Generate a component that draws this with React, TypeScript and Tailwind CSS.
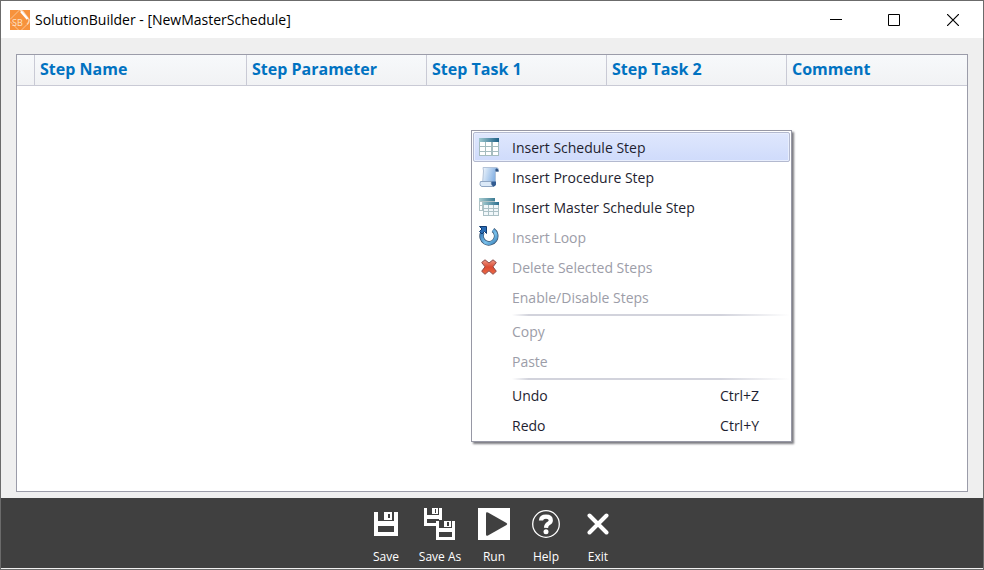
import type { ReactNode } from "react";

const uiFont = "font-['Open_Sans','Noto_Sans',sans-serif]";

function AppLogo() {
  return (
    <svg width="20" height="20" viewBox="0 0 20 20" aria-hidden="true">
      <rect width="20" height="20" fill="#f7923c" />
      <path d="M0 9.500 9.500 0M0 11.500 8.500 20M11.500 20 17 14.500" stroke="#fbc493" strokeWidth="1" fill="none" />
      <path d="M10 .5Q13 .5 14 3L19 9.500Q19.500 12 17 14.500" stroke="#fcd5b0" strokeWidth="1.500" fill="none" />
      <path d="M11 1.500 17.500 9" stroke="#fff" strokeWidth="2" />
      <text x="2" y="16" fontSize="9" fontFamily="Open Sans, sans-serif" fill="#fde2c8">SB</text>
    </svg>
  );
}

function TableIcon() {
  return (
    <svg width="20" height="18" viewBox="0 0 20 18" aria-hidden="true">
      <defs>
        <linearGradient id="tableHead" x1="0" x2="1">
          <stop offset="0" stopColor="#9fc9cf" />
          <stop offset="1" stopColor="#1c5f86" />
        </linearGradient>
      </defs>
      <rect width="20" height="18" fill="#a5bcbf" />
      <rect width="20" height="4" fill="url(#tableHead)" />
      <g fill="#fff">
        {[4, 9, 14].map((y) =>
          [1, 7, 14].map((x) => (
            <rect key={`${x}-${y}`} x={x} y={y} width="5" height={y === 14 ? 3 : 4} />
          )),
        )}
      </g>
    </svg>
  );
}

function ScrollIcon() {
  return (
    <svg width="20" height="20" viewBox="0 0 20 20" aria-hidden="true">
      <defs>
        <linearGradient id="paper" x1="0" x2="1" y2=".3">
          <stop offset="0" stopColor="#f1f7fd" />
          <stop offset="1" stopColor="#79a9e0" />
        </linearGradient>
      </defs>
      <path d="M4 .5h13q2.500 0 2.500 2.500V4.500H16.500v13H3.500L4.500 4Z" fill="url(#paper)" stroke="#b3c3d8" />
      <path d="M16.500 4.500V2.500Q17 1 18 1.500T19.500 3.500v1Z" fill="#2f527f" />
      <path d="M1.500 14.500H12.500q-1 4 2.500 5H3Q0 19 1.500 14.500Z" fill="#dbe9f8" stroke="#8fa6c4" />
      <path d="M12.500 14.500h4.500v3q-.5 2-2.500 2Q12 18.500 12.500 14.500Z" fill="#315b91" />
    </svg>
  );
}

function TablesIcon() {
  return (
    <svg width="20" height="18" viewBox="0 0 20 18" aria-hidden="true">
      <defs>
        <linearGradient id="backHead" x1="0" x2="1">
          <stop offset="0" stopColor="#a9cdd1" />
          <stop offset="1" stopColor="#3c7b93" />
        </linearGradient>
        <linearGradient id="frontHead" x1="0" x2="1">
          <stop offset="0" stopColor="#9cc4ca" />
          <stop offset="1" stopColor="#2b6f90" />
        </linearGradient>
      </defs>
      <path d="M0 0h16v13H0Z" fill="#b0c3c6" />
      <path d="M0 0h16v3H0Z" fill="url(#backHead)" />
      <path d="M1 4h2v3H1ZM1 8h2v4H1Z" fill="#fff" />
      <path d="M4 4h16v14H4Z" fill="#abc0c5" />
      <path d="M4 4h16v3H4Z" fill="url(#frontHead)" />
      <path
        d="M5 7h4v3H5ZM10 7h4v3h-4ZM15 7h4v3h-4ZM5 11h4v2H5ZM10 11h4v2h-4ZM15 11h4v2h-4ZM5 14h4v3H5ZM10 14h4v3h-4ZM15 14h4v3h-4Z"
        fill="#f1f7fa"
      />
    </svg>
  );
}

function LoopIcon() {
  return (
    <svg width="20" height="20" viewBox="0 0 20 20" aria-hidden="true" className="-mt-0.5">
      <defs>
        <linearGradient id="loop" x1="0" x2="1" y2="1">
          <stop offset="0" stopColor="#2a6fb3" />
          <stop offset=".6" stopColor="#79c0ea" />
          <stop offset="1" stopColor="#3d86bd" />
        </linearGradient>
      </defs>
      <path d="M3.500 6.500A7.300 7.300 0 1 0 14 4" fill="none" stroke="#39536f" strokeWidth="4.600" />
      <path d="M3.500 6.500A7.300 7.300 0 1 0 14 4" fill="none" stroke="url(#loop)" strokeWidth="3.200" />
      <path d="M.5.5h7v7L5.500 5.500 3 8 .5 5.500 3 3Z" fill="#2a6cb4" stroke="#123c72" />
    </svg>
  );
}

function DeleteIcon() {
  return (
    <svg width="16" height="16" viewBox="0 0 16 16" aria-hidden="true">
      <defs>
        <linearGradient id="cross" y2="1" x2="0">
          <stop offset="0" stopColor="#ee9a88" />
          <stop offset=".5" stopColor="#dc4a32" />
          <stop offset="1" stopColor="#ec6a46" />
        </linearGradient>
      </defs>
      <path
        d="M4 .8 8 4 12 .8 15.300 3.500 12 7.800 15.300 12.300 12 15.300 8 11.800 4 15.300 .7 12.300 4 7.800 .7 3.500Z"
        fill="url(#cross)"
        stroke="#8d4a48"
        strokeLinejoin="round"
      />
    </svg>
  );
}

function SaveIcon() {
  return (
    <svg width="24" height="24" viewBox="0 0 24 24" aria-hidden="true" fill="#fff" fillRule="evenodd">
      <path d="M0 0h4v9h16V0h4v24H0ZM4 14v6h16v-6Z" />
      <path d="M10 0h8v8h-8ZM14 2v4h2V2Z" />
    </svg>
  );
}

function SaveAsIcon() {
  return (
    <svg width="32" height="32" viewBox="0 0 32 32" aria-hidden="true" fill="#fff" fillRule="evenodd">
      <path d="M0 0h3v7h12V0h3v18H0ZM3 11v4h12v-4Z" />
      <path d="M8 0h6v6H8ZM11 1v4h1V1Z" />
      <path d="M12 12h20v20H12Z" fill="#404040" />
      <path d="M12 13h3v7h13v-7h3v19H12ZM15 24v5h13v-5Z" />
      <path d="M20 13h7v6h-7ZM23 14v4h2v-4Z" />
    </svg>
  );
}

function RunIcon() {
  return (
    <svg width="32" height="32" viewBox="0 0 32 32" aria-hidden="true">
      <path d="M0 0h32v32H0Z" fill="#fff" />
      <path d="M8 5.500q0-2 2-1L28.500 15q1.500 1 0 2L10 27.500q-2 1-2-1Z" fill="#404040" />
    </svg>
  );
}

function HelpIcon() {
  return (
    <svg width="28" height="28" viewBox="0 0 28 28" aria-hidden="true" fill="none" stroke="#fff">
      <circle cx="14" cy="14" r="13.300" strokeWidth="1.300" />
      <path d="M9 10.500q.2-3.800 5-3.800t4.800 3.600q0 2-2.300 3.200T14 17.800" strokeWidth="4.200" />
      <circle cx="14" cy="21.700" r="2.500" fill="#fff" stroke="none" />
    </svg>
  );
}

function ExitIcon() {
  return (
    <svg width="22" height="22" viewBox="0 0 22 22" aria-hidden="true">
      <path d="m2.500 2.500 17 17m0-17-17 17" stroke="#fff" strokeWidth="4" strokeLinecap="round" />
    </svg>
  );
}

type MenuEntry = { label: string; icon?: ReactNode; shortcut?: string; disabled?: boolean; active?: boolean };

const menuGroups: MenuEntry[][] = [
  [
    { label: "Insert Schedule Step", icon: <TableIcon />, active: true },
    { label: "Insert Procedure Step", icon: <ScrollIcon /> },
    { label: "Insert Master Schedule Step", icon: <TablesIcon /> },
    { label: "Insert Loop", icon: <LoopIcon />, disabled: true },
    { label: "Delete Selected Steps", icon: <DeleteIcon />, disabled: true },
    { label: "Enable/Disable Steps", disabled: true },
  ],
  [
    { label: "Copy", disabled: true },
    { label: "Paste", disabled: true },
  ],
  [
    { label: "Undo", shortcut: "Ctrl+Z" },
    { label: "Redo", shortcut: "Ctrl+Y" },
  ],
];

function MenuItem({ label, icon, shortcut, disabled, active }: MenuEntry) {
  return (
    <button
      type="button"
      role="menuitem"
      disabled={disabled}
      className={`flex h-[30px] w-full items-center rounded-[2px] border pr-[30px] text-left text-[14px] ${
        active
          ? "border-[#b3b9cf] bg-linear-to-b from-[#dfe7fd] to-[#cfdbfb] shadow-[inset_0_0_0_1px_#e8eefd]"
          : "border-transparent"
      } ${disabled ? "text-[#9c9da8]" : "text-[#1e1e30]"}`}
    >
      <span className="flex w-[30px] shrink-0 items-center justify-center">{icon}</span>
      <span className="ml-2 flex-1">{label}</span>
      {shortcut && <span>{shortcut}</span>}
    </button>
  );
}

function ContextMenu() {
  return (
    <div
      role="menu"
      className="absolute top-[75px] left-[454px] w-[321px] border border-[#9798a5] bg-white p-px shadow-[2px_2px_2px_#7c7c82]"
    >
      {menuGroups.map((group, index) => (
        <div key={group[0].label}>
          {index > 0 && (
            <div role="separator" className="flex h-1 items-end pl-[39px]">
              <div className="h-0.5 w-full bg-[linear-gradient(to_right,transparent,#d2d3dc_6%,#d2d3dc_75%,transparent)]" />
            </div>
          )}
          {group.map((entry) => (
            <MenuItem key={entry.label} {...entry} />
          ))}
        </div>
      ))}
    </div>
  );
}

const columns = [
  { name: "Step Name", width: "w-[212px]" },
  { name: "Step Parameter", width: "w-[180px]" },
  { name: "Step Task 1", width: "w-[180px]" },
  { name: "Step Task 2", width: "w-[180px]" },
];

const actions = [
  { label: "Save", icon: <SaveIcon />, width: "w-[52px]" },
  { label: "Save As", icon: <SaveAsIcon />, width: "w-[56px]" },
  { label: "Run", icon: <RunIcon />, width: "w-[52px]" },
  { label: "Help", icon: <HelpIcon />, width: "w-[52px]" },
  { label: "Exit", icon: <ExitIcon />, width: "w-[52px]" },
];

function TitleBar() {
  return (
    <header className="flex h-[37px] items-center bg-white pl-[9px]">
      <AppLogo />
      <h1 className="ml-[5px] flex-1 text-[14px] text-black">SolutionBuilder - [NewMasterSchedule]</h1>
      <div className="flex h-full">
        <button type="button" aria-label="Minimize" className="flex w-[58px] items-center justify-center">
          <svg width="12" height="12" viewBox="0 0 12 12" shapeRendering="crispEdges">
            <path d="M0 5h12v1H0Z" />
          </svg>
        </button>
        <button type="button" aria-label="Maximize" className="flex w-[58px] items-center justify-center">
          <svg width="12" height="12" viewBox="0 0 12 12">
            <path d="M.5.5h11v11H.5Z" fill="none" stroke="#000" />
          </svg>
        </button>
        <button type="button" aria-label="Close" className="flex w-[60px] items-center justify-center">
          <svg width="12" height="12" viewBox="0 0 12 12">
            <path d="m0 0 12 12M12 0 0 12" stroke="#000" strokeWidth="1.200" />
          </svg>
        </button>
      </div>
    </header>
  );
}

export default function App() {
  return (
    <div className={`flex min-h-screen flex-col border border-[#6b6b6b] bg-[#efefef] ${uiFont}`}>
      <TitleBar />
      <main className="flex flex-1 flex-col px-[15px] pt-4 pb-1.5">
        <div className="relative flex-1 border border-[#9b9ca9] bg-white">
          <table className="w-full table-fixed border-separate border-spacing-0">
            <thead>
              <tr className="h-[31px] bg-linear-to-b from-[#f7f9fb] to-[#f1f2f4] text-left text-[16px] font-bold text-[#0072c1]">
                <td className="w-[18px] border-r border-b border-[#c9cad5] p-0" />
                {columns.map((column) => (
                  <th
                    key={column.name}
                    scope="col"
                    className={`${column.width} border-r border-b border-[#c9cad5] pt-0 pr-0 pb-0.5 pl-[5px] leading-[20px]`}
                  >
                    {column.name}
                  </th>
                ))}
                <th scope="col" className="border-b border-[#c9cad5] pt-0 pr-0 pb-0.5 pl-[5px] leading-[20px]">
                  Comment
                </th>
              </tr>
            </thead>
          </table>
          <ContextMenu />
        </div>
      </main>
      <footer className="flex h-[71px] justify-center border-b border-[#efefef] bg-[#404040] pt-[9px]">
        {actions.map((action) => (
          <button
            key={action.label}
            type="button"
            className={`${action.width} flex flex-col items-center text-[12px] text-white`}
          >
            <span className="flex h-[34px] items-center">{action.icon}</span>
            <span className="mt-[7px] leading-[18px] whitespace-nowrap">{action.label}</span>
          </button>
        ))}
      </footer>
    </div>
  );
}
